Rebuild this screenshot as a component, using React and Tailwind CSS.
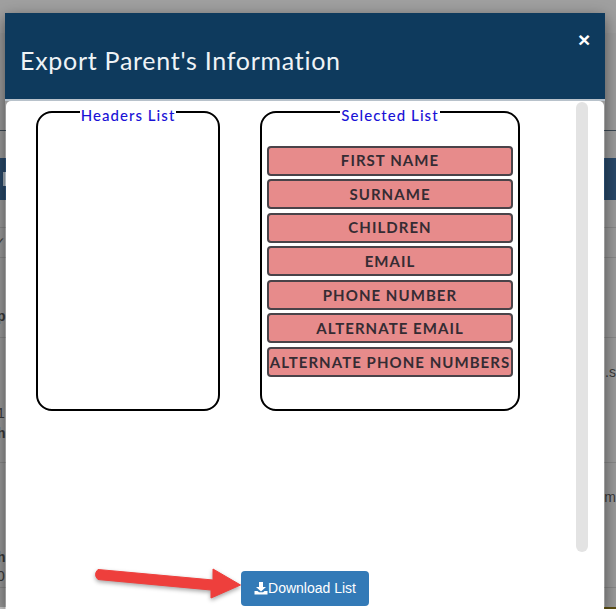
import React from "react";

const items = ["FIRST NAME", "SURNAME", "CHILDREN", "EMAIL", "PHONE NUMBER", "ALTERNATE EMAIL", "ALTERNATE PHONE NUMBERS"];

function Backdrop() {
  return (
    <div className="flex h-full flex-col bg-[#9c9c9c] font-['Liberation_Sans',sans-serif] text-[14px] text-[#3a3a3a]">
      <div className="h-[33px] bg-[#a0a0a0]" />
      <div className="h-[98px] border-b border-[#3c4a55]" />
      <div className="h-[27px]" />
      <div className="flex h-[42px] items-center bg-[#29496a] pl-[3px]">
        <div className="h-[14px] w-[3px] bg-[#a9b3bc]" />
      </div>
      <div className="h-[28px] border-b border-[#8a8a8a]" />
      <div className="flex h-[30px] items-center border-b border-[#8a8a8a] text-[#444]">
        <span className="-ml-[6px]">✓</span>
      </div>
      <div className="flex h-[80px] items-start border-b border-[#8a8a8a] pt-[48px]">
        <span className="-ml-[3px] font-bold">p</span>
      </div>
      <div className="flex h-[125px] items-start justify-between border-b border-[#8a8a8a] pt-[24px]">
        <span className="-ml-[3px] mt-[41px] leading-[20px]">
          1<br />
          <b>h</b>
        </span>
        <span className="font-['Liberation_Sans',sans-serif]">.s</span>
      </div>
      <div className="flex h-[125px] items-start justify-between border-b border-[#8a8a8a] pt-[24px]">
        <span className="-ml-[3px] mt-[61px] leading-[19px]">
          <b>h</b>
          <br />0
        </span>
        <span>om</span>
      </div>
      <div className="flex-1" />
      <div className="flex h-[2px] bg-[#5c4f12]">
        <div className="w-[26px] bg-[#d0d0d0]" />
      </div>
    </div>
  );
}

function ListBox({ title, width, children }) {
  return (
    <fieldset className={`${width} h-[308px] rounded-[16px] border-2 border-black px-[5px] pb-0 pt-0`}>
      <legend className="mx-auto translate-y-[3px] px-[1px] text-center font-['Lato',sans-serif] text-[15px] font-medium leading-[18px] tracking-[1.05px] text-[#1a12d6]">
        {title}
      </legend>
      {children}
    </fieldset>
  );
}

function Arrow() {
  return (
    <svg className="absolute left-[88px] top-[557px] drop-shadow-[0_2px_2px_rgba(0,0,0,0.35)]" width="156" height="52" viewBox="0 0 156 52" fill="none">
      <path
        d="M10 12.5 L125 23 L125 12 L152.5 28 L123 41 L123 33 L10 22.5 Q5 17.5 10 12.5 Z"
        fill="#ee3f3c"
        stroke="#ee3f3c"
        strokeWidth="1"
        strokeLinejoin="round"
      />
    </svg>
  );
}

export default function App() {
  return (
    <div className="relative h-[609px] w-[616px] overflow-hidden">
      <Backdrop />
      <div className="absolute left-[5px] top-[13px] h-[596px] w-[600px] shadow-[0_5px_15px_rgba(0,0,0,0.5)]">
        <div className="relative flex h-[86px] items-center bg-[#0e3a5d] pl-[15px] pt-[9px] font-['Lato',sans-serif] text-[25px] font-normal tracking-[0.72px] text-[#eef3f6]">
          Export Parent's Information
          <span className="absolute right-[14px] top-[14px] font-['Liberation_Sans',sans-serif] text-[21px] font-bold leading-[26px] text-white">
            ×
          </span>
        </div>
        <div className="h-[2px] bg-[#b8c2cb]" />
        <div className="relative mx-[1px] flex h-[508px] rounded-t-[5px] bg-white -mt-[0.5px]">
          <div className="flex h-fit gap-[40px] pl-[30px] pt-[2px]">
            <ListBox title="Headers List" width="w-[184px]" />
            <ListBox title="Selected List" width="w-[260px]">
              <div className="mt-[25px] flex flex-col gap-[3.6px]">
                {items.map((t) => (
                  <div
                    key={t}
                    className="flex h-[30px] items-center justify-center whitespace-nowrap rounded-[4px] border-2 border-[#4a4349] bg-[#e78b8b] font-['Lato',sans-serif] text-[15px] font-bold tracking-[1.05px] text-[#352c33]"
                  >
                    {t}
                  </div>
                ))}
              </div>
            </ListBox>
          </div>
          <div className="absolute left-[570px] top-[1px] h-[450px] w-[12px] rounded-[6px] bg-[#e3e3e3]" />
        </div>
      </div>
      <Arrow />
      <button className="absolute left-[241px] top-[571px] flex h-[35px] w-[128px] items-center justify-center rounded-[4px] bg-[#337ab7] font-['Liberation_Sans',sans-serif] text-[14px] text-white">
        <svg width="14" height="14" viewBox="0 0 14 14" fill="white" className="mb-[2px]">
          <path d="M5 1h4v5h3L7 10.5 2 6h3z" />
          <path d="M0.5 10h3l1.5 1.3h4L10.5 10h3v3.5H0.5z" />
        </svg>
        Download List
      </button>
    </div>
  );
}
